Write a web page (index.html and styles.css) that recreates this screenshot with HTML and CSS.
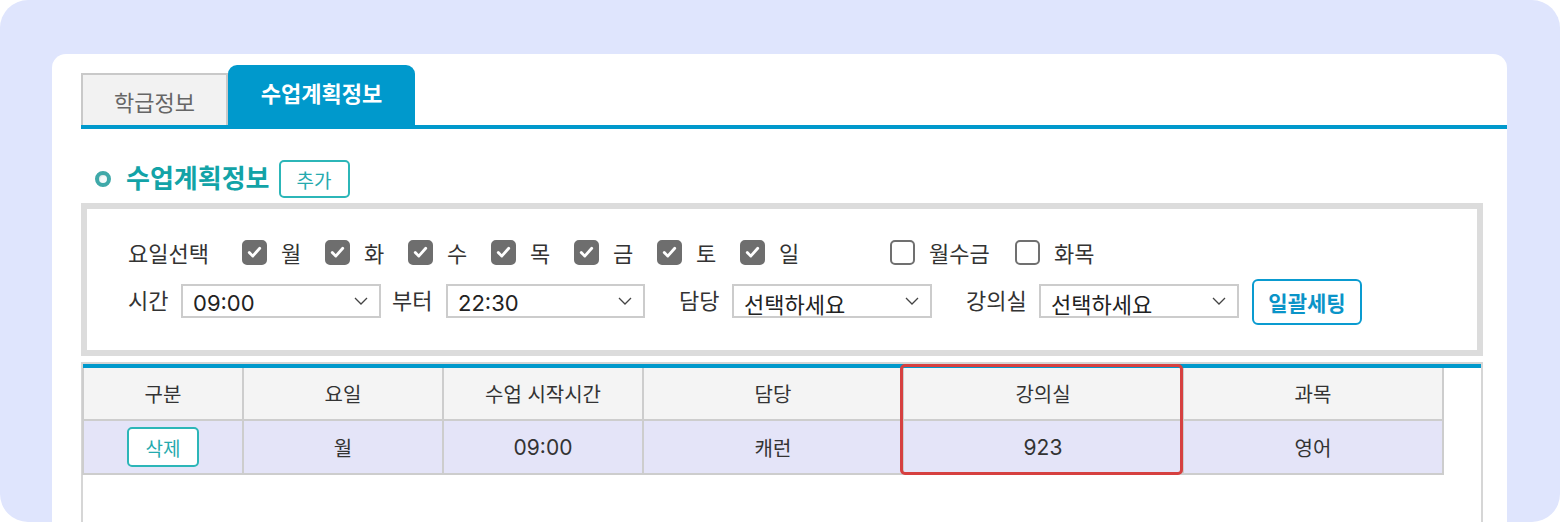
FILE: index.html
```html
<!DOCTYPE html>
<html lang="ko">
<head>
<meta charset="utf-8">
<title>수업계획정보</title>
<link rel="stylesheet" href="styles.css">
</head>
<body>
<div class="frame">
  <div class="card">
    <div class="tabs">
      <div class="tab">학급정보</div>
      <div class="tab active">수업계획정보</div>
    </div>

    <div class="section-title">
      <span class="bullet"></span>
      <h2>수업계획정보</h2>
      <button class="btn-teal btn-add">추가</button>
    </div>

    <div class="filter">
      <div class="row row-days">
        <span class="lbl lbl-days">요일선택</span>
        <label class="chk"><span class="box on"><svg viewBox="0 0 24 24"><path d="M6 12.5l4 4.2 8-9"/></svg></span>월</label>
        <label class="chk"><span class="box on"><svg viewBox="0 0 24 24"><path d="M6 12.5l4 4.2 8-9"/></svg></span>화</label>
        <label class="chk"><span class="box on"><svg viewBox="0 0 24 24"><path d="M6 12.5l4 4.2 8-9"/></svg></span>수</label>
        <label class="chk"><span class="box on"><svg viewBox="0 0 24 24"><path d="M6 12.5l4 4.2 8-9"/></svg></span>목</label>
        <label class="chk"><span class="box on"><svg viewBox="0 0 24 24"><path d="M6 12.5l4 4.2 8-9"/></svg></span>금</label>
        <label class="chk"><span class="box on"><svg viewBox="0 0 24 24"><path d="M6 12.5l4 4.2 8-9"/></svg></span>토</label>
        <label class="chk"><span class="box on"><svg viewBox="0 0 24 24"><path d="M6 12.5l4 4.2 8-9"/></svg></span>일</label>
        <label class="chk chk-mwf"><span class="box"></span>월수금</label>
        <label class="chk"><span class="box"></span>화목</label>
      </div>
      <div class="row row-sel">
        <span class="lbl w-time">시간</span>
        <div class="select"><span>09:00</span><svg viewBox="0 0 14 8"><path d="M1 1l6 6 6-6"/></svg></div>
        <span class="lbl w-from">부터</span>
        <div class="select s-second"><span>22:30</span><svg viewBox="0 0 14 8"><path d="M1 1l6 6 6-6"/></svg></div>
        <span class="lbl w-teacher">담당</span>
        <div class="select"><span>선택하세요</span><svg viewBox="0 0 14 8"><path d="M1 1l6 6 6-6"/></svg></div>
        <span class="lbl w-room">강의실</span>
        <div class="select"><span>선택하세요</span><svg viewBox="0 0 14 8"><path d="M1 1l6 6 6-6"/></svg></div>
        <button class="btn-apply">일괄세팅</button>
      </div>
    </div>

    <div class="table-wrap">
      <div class="blue-bar"></div>
      <table class="plan">
        <colgroup>
          <col class="c1"><col class="c2"><col class="c3"><col class="c4"><col class="c5"><col class="c6">
        </colgroup>
        <thead>
          <tr><th>구분</th><th>요일</th><th>수업 시작시간</th><th>담당</th><th>강의실</th><th>과목</th></tr>
        </thead>
        <tbody>
          <tr><td><button class="btn-teal btn-del">삭제</button></td><td>월</td><td class="num">09:00</td><td>캐런</td><td class="num">923</td><td>영어</td></tr>
        </tbody>
      </table>
      <div class="highlight"></div>
    </div>
  </div>
</div>
</body>
</html>
```

FILE: styles.css
```css
* { box-sizing: border-box; }
html, body { margin: 0; padding: 0; background: #ffffff; }
body {
  font-family: "Inter", "Noto Sans CJK KR", "Noto Sans", sans-serif;
  color: #333;
  width: 1560px;
  height: 522px;
  overflow: hidden;
}
button { font-family: inherit; cursor: pointer; }

.frame {
  background: #dfe5fd;
  border-radius: 28px;
  height: 522px;
  padding: 54px 53px 0 52px;
  overflow: hidden;
}
.card {
  background: #fff;
  border-radius: 14px 14px 0 0;
  height: 480px;
  padding: 11px 0 0 29px;
}

/* tabs */
.tabs {
  display: flex;
  align-items: flex-end;
  border-bottom: 4px solid #0099cc;
  height: 64px;
}
.tab {
  width: 147px;
  height: 52px;
  background: #f2f2f2;
  border: 2px solid #c9c9c9;
  border-bottom: none;
  display: flex;
  align-items: center;
  justify-content: center;
  font-size: 22px;
  color: #666;
  padding-top: 2px;
}
.tab.active {
  width: 187px;
  height: 60px;
  background: #0099cc;
  border: none;
  border-radius: 9px 9px 0 0;
  color: #fff;
  font-weight: 700;
  padding-top: 0;
  padding-bottom: 6px;
}

/* section title */
.section-title {
  display: flex;
  align-items: center;
  margin: 31px 0 0 14px;
  height: 38px;
}
.bullet {
  width: 16px;
  height: 16px;
  border-radius: 50%;
  background: #f4fbfb;
  border: 4.5px solid #3fa9a9;
  box-shadow: inset 1px 1px 1px rgba(0,0,0,0.08);
  margin-right: 15px;
}
.section-title h2 {
  margin: 0;
  font-size: 26px;
  font-weight: 700;
  color: #12a3a7;
  line-height: 1;
}
.btn-teal {
  background: #fff;
  border: 2px solid #2cb6b8;
  border-radius: 5px;
  color: #25aaae;
  font-size: 19px;
  padding: 0;
}
.btn-add {
  width: 71px;
  height: 38px;
  margin-left: 9px;
}

/* filter box */
.filter {
  margin: 5px 24px 0 0;
  border: 6px solid #dcdcdc;
  height: 153px;
  padding: 30px 0 0 41px;
}
.row { display: flex; align-items: center; }
.row-days { height: 26px; }
.row-sel { height: 46px; margin-top: 14px; }
.lbl { font-size: 22px; color: #333; white-space: nowrap; }
.lbl-days { width: 114px; }
.chk {
  display: flex;
  align-items: center;
  width: 83px;
  font-size: 22px;
  color: #333;
}
.chk-mwf { margin-left: 67px; width: 125px; }
.box {
  width: 25px;
  height: 25px;
  border-radius: 5px;
  border: 2px solid #707070;
  background: #fff;
  margin-right: 14px;
  display: flex;
  align-items: center;
  justify-content: center;
  flex: none;
}
.box.on { background: #6e6e6e; border-color: #6e6e6e; }
.box svg { width: 22px; height: 22px; }
.box svg path { fill: none; stroke: #fff; stroke-width: 3.2; stroke-linecap: round; stroke-linejoin: round; }

.row-sel .lbl { padding-bottom: 7px; }
.w-time { width: 53px; }
.w-from { width: 54px; margin-left: 11px; }
.w-teacher { width: 53px; margin-left: 34px; }
.w-room { width: 73px; margin-left: 34px; }
.select {
  width: 200px;
  height: 34px;
  border: 2px solid #cccccc;
  background: #fff;
  display: flex;
  align-items: center;
  justify-content: space-between;
  padding: 3px 10px 0 10px;
  font-size: 22px;
  color: #222;
  margin-top: -2px;
}
.s-second { width: 199px; }
.select svg { width: 14px; height: 8px; margin-right: 1px; margin-top: -3px; }
.select svg path { fill: none; stroke: #444; stroke-width: 1.3; }
.btn-apply {
  margin-left: 13px;
  width: 110px;
  height: 46px;
  background: #fff;
  border: 2px solid #0a9bd0;
  border-radius: 6px;
  color: #0a94c8;
  font-size: 21px;
  font-weight: 700;
  padding: 0;
}

/* table */
.table-wrap {
  position: relative;
  margin: 6px 24px 0 0;
  border: 2px solid #d6d6d6;
  border-bottom: none;
  height: 200px;
}
.blue-bar { height: 4px; background: #0099cc; }
.plan {
  border-collapse: collapse;
  table-layout: fixed;
  width: 1360px;
  margin-left: -1px;
}
.c1 { width: 160px; }
.c2 { width: 200px; }
.c3 { width: 200px; }
.c4 { width: 260px; }
.c5 { width: 280px; }
.c6 { width: 260px; }
.plan th, .plan td {
  border: 2px solid #cdcdcd;
  text-align: center;
  font-size: 20px;
  font-weight: 400;
  color: #333;
  padding: 0;
}
.plan td.num { font-size: 21px; }
.plan thead th { border-top: none; background: #f4f4f4; height: 52px; }
.plan tbody td { background: #e4e4f8; height: 54px; }
.btn-del { width: 72px; height: 40px; vertical-align: middle; }

.highlight {
  position: absolute;
  left: 817px;
  top: 0;
  width: 283px;
  height: 111px;
  border: 3px solid #d64040;
  border-radius: 5px;
  pointer-events: none;
}
```
